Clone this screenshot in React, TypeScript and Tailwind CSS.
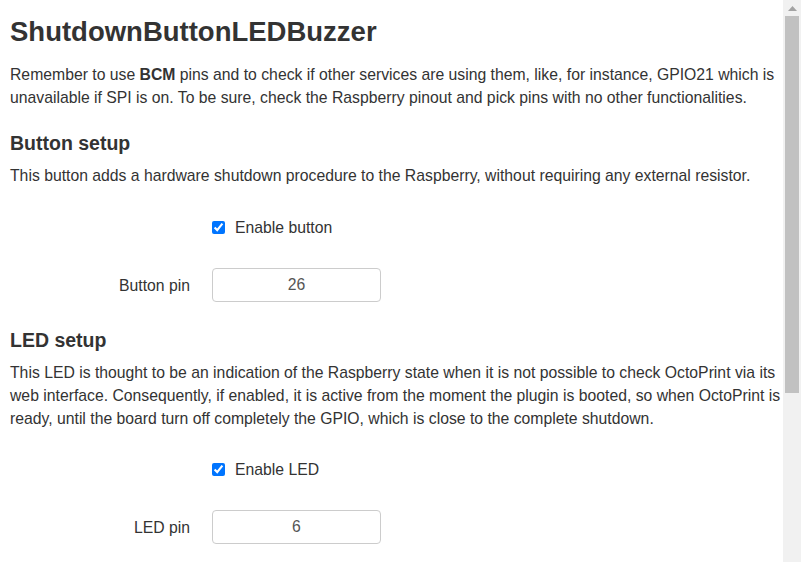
import React from 'react';

function Scrollbar() {
  return (
    <div className="w-[18px] shrink-0 h-full bg-[#f1f1f1] flex flex-col items-center">
      <div className="h-[16px] w-full flex items-center justify-center">
        <svg width="9" height="5" viewBox="0 0 9 5">
          <path d="M0 5 L4.5 0 L9 5 Z" fill="#a3a3a3" />
        </svg>
      </div>
      <div className="w-[14px] h-[377px] bg-[#c1c1c1]" />
    </div>
  );
}

function CheckRow({ label }: { label: string }) {
  return (
    <div className="flex items-center h-[23px] pl-[202px]">
      <input type="checkbox" defaultChecked className="w-[13px] h-[13px] m-0 accent-[#0075ff]" />
      <span className="ml-[10px]">{label}</span>
    </div>
  );
}

function PinRow({ label, value }: { label: string; value: string }) {
  return (
    <div className="flex items-center">
      <label className="w-[180px] text-right">{label}</label>
      <input
        type="text"
        defaultValue={value}
        className="ml-[22px] w-[169px] h-[34px] border border-[#cccccc] rounded-[4px] text-center text-[#555555] outline-none"
      />
    </div>
  );
}

export default function App() {
  return (
    <div className="flex w-full h-[562px] overflow-hidden bg-white">
      <div
        className="w-[783px] shrink-0 pl-[10px] text-[#333333] text-[15.75px] leading-[23px]"
        style={{ fontFamily: '"Liberation Sans", Arial, sans-serif' }}
      >
        <h1 className="mt-[12px] text-[27.5px] leading-[40px] font-bold">ShutdownButtonLEDBuzzer</h1>
        <p className="mt-[11px]">
          Remember to use <b>BCM</b> pins and to check if other services are using them, like, for instance, GPIO21 which is
          unavailable if SPI is on. To be sure, check the Raspberry pinout and pick pins with no other functionalities.
        </p>

        <h3 className="mt-[20px] text-[19.5px] leading-[28px] font-bold">Button setup</h3>
        <p className="mt-[7px]">
          This button adds a hardware shutdown procedure to the Raspberry, without requiring any external resistor.
        </p>
        <div className="mt-[29px]">
          <CheckRow label="Enable button" />
        </div>
        <div className="mt-[29px]">
          <PinRow label="Button pin" value="26" />
        </div>

        <h3 className="mt-[24px] text-[19.5px] leading-[28px] font-bold">LED setup</h3>
        <p className="mt-[7px]">
          This LED is thought to be an indication of the Raspberry state when it is not possible to check OctoPrint via its
          web interface. Consequently, if enabled, it is active from the moment the plugin is booted, so when OctoPrint is
          ready, until the board turn off completely the GPIO, which is close to the complete shutdown.
        </p>
        <div className="mt-[28px]">
          <CheckRow label="Enable LED" />
        </div>
        <div className="mt-[29px]">
          <PinRow label="LED pin" value="6" />
        </div>
      </div>
      <Scrollbar />
    </div>
  );
}
